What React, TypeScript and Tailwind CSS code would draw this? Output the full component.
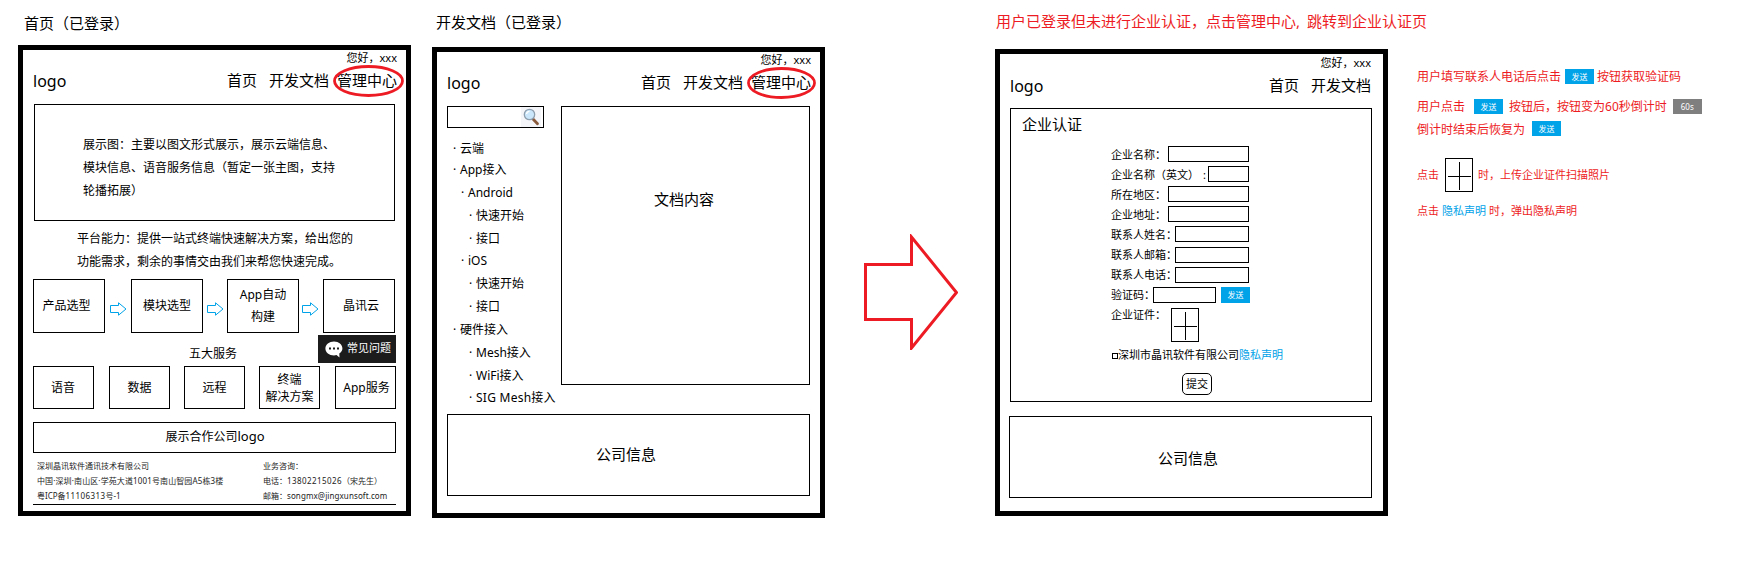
import type { ReactNode } from "react";

type Kids = { children?: ReactNode; className?: string };

const Box = ({ children, className = "" }: Kids) => (
  <div className={`flex shrink-0 border border-black ${className}`}>{children}</div>
);

const Frame = ({ children, className = "" }: Kids) => (
  <div className={`flex w-[393px] shrink-0 flex-col border-5 border-black ${className}`}>{children}</div>
);

const Send = ({ children = "发送", className = "" }: Kids) => (
  <span
    className={`flex h-[15px] w-[29px] shrink-0 items-center justify-center text-[8px] leading-none text-white ${
      className.includes("bg-") ? "" : "bg-[#00a2e8]"
    } ${className}`}
  >
    {children}
  </span>
);

const Plus = ({ className = "" }: Kids) => (
  <svg width="28" height="34" viewBox="0 0 28 34" shapeRendering="crispEdges" className={`shrink-0 ${className}`}>
    <path d="M.5.5h27v33H.5zM14.5 4v28M3 18.5h23" fill="none" stroke="#000" />
  </svg>
);

const FlowArrow = ({ className = "" }: Kids) => (
  <svg width="17" height="14" viewBox="0 0 17 14" className={`mt-[23px] shrink-0 ${className}`}>
    <path d="M.5 3.5h8V.8L16 7l-7.5 6.2v-2.7h-8z" fill="none" stroke="#00a2e8" />
  </svg>
);

const Header = ({
  manage = false,
  width = "",
  pad = "pr-[9px]",
}: {
  manage?: boolean;
  width?: string;
  pad?: string;
}) => (
  <>
    <div className={`flex h-[17px] shrink-0 items-center justify-end text-[11px] ${pad}`}>您好，xxx</div>
    <div className={`flex h-[29px] shrink-0 items-center pb-[2px] pl-[10px] text-[15px] ${pad}`}>
      <span className="mr-auto text-[16px]">logo</span>
      <span>首页</span>
      <span className="ml-3">开发文档</span>
      {manage && (
        <span className="relative ml-2">
          管理中心
          <svg
            viewBox="0 0 71 32"
            preserveAspectRatio="none"
            className={`absolute top-1/2 left-[-4px] h-8 -translate-y-1/2 ${width}`}
          >
            <ellipse cx="35.5" cy="16" rx="34" ry="14.5" fill="none" stroke="#ed1c24" strokeWidth="2.8" />
          </svg>
        </span>
      )}
    </div>
  </>
);

const HomePage = () => (
  <section className="ml-[18px] flex w-[393px] shrink-0 flex-col">
    <h2 className="flex h-[45px] items-center pt-[1px] pl-[6px] text-[15px]">首页（已登录）</h2>
    <Frame className="h-[471px]">
      <Header manage width="w-[71px]" />
      <Box className="mt-2 ml-[11px] h-[117px] w-[361px] flex-col pt-7 pl-12 text-[12px] leading-[23px]">
        <p className="h-[23px]">展示图：主要以图文形式展示，展示云端信息、</p>
        <p className="h-[23px]">模块信息、语音服务信息（暂定一张主图，支持</p>
        <p className="h-[23px]">轮播拓展）</p>
      </Box>
      <div className="mt-[6px] ml-[54px] h-[46px] text-[12px] leading-[23px]">
        <p className="h-[23px]">平台能力：提供一站式终端快速解决方案，给出您的</p>
        <p className="h-[23px]">功能需求，剩余的事情交由我们来帮您快速完成。</p>
      </div>
      <div className="mt-[6px] ml-[10px] flex h-[54px] text-[12px]">
        <Box className="w-[72px] items-center justify-center pr-[5px]">产品选型</Box>
        <FlowArrow className="mr-1 ml-[5px]" />
        <Box className="w-[72px] items-center justify-center">模块选型</Box>
        <FlowArrow className="mr-[3px] ml-1" />
        <Box className="w-[72px] flex-col items-center pt-1 leading-[22px]">
          <span className="h-[22px]">App自动</span>
          <span className="h-[22px]">构建</span>
        </Box>
        <FlowArrow className="mr-1 ml-[3px]" />
        <Box className="w-[72px] items-center justify-center pl-1">晶讯云</Box>
      </div>
      <div className="mt-[2px] ml-[166px] flex h-7 text-[12px]">
        <span className="flex w-12 items-center pt-[9px]">五大服务</span>
        <span className="ml-[81px] flex w-[78px] items-center bg-[#1c1c1c] pl-[7px] text-[11px] text-white">
          <svg width="18" height="17" viewBox="0 0 18 17" className="mr-1 shrink-0">
            <path d="M9 .4C4.200.4.4 3.500.4 7.400s3.800 7 8.600 7c.9 0 1.700-.1 2.500-.3l3 2.300-.2-4c1.900-1.300 3.100-3 3.100-5C17.400 3.500 13.800.4 9 .4z" fill="#fff" />
            <path d="M4 6.500h2v2H4zM8 6.500h2v2H8zM12 6.500h2v2h-2z" fill="#1c1c1c" />
          </svg>
          <span className="pb-[2px]">常见问题</span>
        </span>
      </div>
      <div className="mt-[3px] ml-[10px] flex h-[43px] text-[12px]">
        <Box className="w-[61px] items-center justify-center pr-px">语音</Box>
        <Box className="ml-[15px] w-[61px] items-center justify-center">数据</Box>
        <Box className="ml-[14px] w-[61px] items-center justify-center">远程</Box>
        <Box className="ml-[14px] w-[61px] flex-col items-center pt-1 leading-[17px]">
          <span className="h-[17px]">终端</span>
          <span className="h-[17px]">解决方案</span>
        </Box>
        <Box className="ml-[15px] w-[61px] items-center justify-center pl-[2px]">App服务</Box>
      </div>
      <Box className="mt-[13px] ml-[10px] h-[31px] w-[363px] items-center justify-center pb-px pl-px text-[12px]">
        <span>
          展示合作公司<span className="text-[13px]">logo</span>
        </span>
      </Box>
      <div className="mt-[5px] ml-[10px] flex h-[47px] w-[363px] border-b border-black pl-1 text-[8px] leading-[15px] whitespace-nowrap text-[#222]">
        <div className="w-[226px]">
          <p className="h-[15px]">深圳晶讯软件通讯技术有限公司</p>
          <p className="h-[15px] tracking-[0.12px]">中国·深圳·南山区·学苑大道1001号南山智园A5栋3楼</p>
          <p className="h-[15px]">
            粤ICP备<span className="tracking-[0.4px]">11106313</span>号-1
          </p>
        </div>
        <div>
          <p className="h-[15px]">业务咨询：</p>
          <p className="h-[15px]">
            电话：<span className="tracking-[0.42px]">13802215026</span>（宋先生）
          </p>
          <p className="h-[15px]">
            邮箱：<span className="tracking-[0.1px]">songmx@jingxunsoft.com</span>
          </p>
        </div>
      </div>
    </Frame>
  </section>
);

const tree: [string, string][] = [
  ["pl-[6px] pt-[3px]", "云端"],
  ["pl-[6px]", "App接入"],
  ["pl-[14px]", "Android"],
  ["pl-[22px]", "快速开始"],
  ["pl-[22px]", "接口"],
  ["pl-[14px]", "iOS"],
  ["pl-[22px]", "快速开始"],
  ["pl-[22px] pt-px", "接口"],
  ["pl-[6px] pt-px", "硬件接入"],
  ["pl-[22px] pt-px", "Mesh接入"],
  ["pl-[22px] pt-px", "WiFi接入"],
  ["pl-[22px] tracking-[0.25px]", "SIG Mesh接入"],
];

const DocsPage = () => (
  <section className="ml-[21px] flex w-[393px] shrink-0 flex-col">
    <h2 className="flex h-[47px] items-center pb-[2px] pl-1 text-[15px]">开发文档（已登录）</h2>
    <Frame className="h-[471px]">
      <Header manage width="w-[69px]" />
      <div className="mt-2 ml-[10px] flex h-[308px]">
        <div className="w-[114px] shrink-0">
          <Box className="h-[22px] w-[97px] justify-end pr-[2px]">
            <span className="flex w-[20px] bg-[#f3f5f9]">
              <svg width="20" height="20" viewBox="0 0 20 20">
                <path d="M12 12l4.500 4.800" stroke="#8a5a3c" strokeWidth="2.800" strokeLinecap="round" />
                <circle cx="8.500" cy="7.500" r="5.200" fill="#c9e6fa" stroke="#8e9fb0" strokeWidth="1.300" />
                <path d="M5.500 7a3.200 3.200 0 0 1 3-2.600" fill="none" stroke="#fff" strokeWidth="1.300" />
              </svg>
            </span>
          </Box>
          <ul className="mt-[8px] text-[12px] whitespace-nowrap">
            {tree.map(([pad, label], i) => (
              <li key={i} className={`flex h-[22.8px] items-center ${pad}`}>
                <span className="w-[7px] shrink-0">·</span>
                {label}
              </li>
            ))}
          </ul>
        </div>
        <Box className="h-[279px] w-[249px] justify-center pt-[81px] pr-[3px] text-[15px] leading-[22px]">文档内容</Box>
      </div>
      <Box className="ml-[10px] h-[82px] w-[363px] items-center justify-center pb-[1px] pr-[5px] text-[15px]">公司信息</Box>
    </Frame>
  </section>
);

const fields: [ReactNode, string, string, string][] = [
  ["企业名称：", "w-[57px]", "w-[81px]", ""],
  [<>企业名称（英文）<span className="ml-1">:</span></>, "w-[97px]", "w-[41px]", ""],
  ["所在地区：", "w-[57px]", "w-[81px]", ""],
  ["企业地址：", "w-[57px]", "w-[81px]", ""],
  ["联系人姓名：", "w-[64px]", "w-[74px]", ""],
  ["联系人邮箱：", "w-[64px]", "w-[74px]", "mt-[2px]"],
  ["联系人电话：", "w-[64px]", "w-[74px]", "mt-[2px]"],
];

const CertPage = () => (
  <section className="flex w-[393px] shrink-0 flex-col">
    <h2 className="flex h-[49px] items-center pb-[7px] pl-[1px] text-[15px] whitespace-nowrap text-[#ed1c24]">
      用户已登录但未进行企业认证，点击管理中心<span className="w-[11px] shrink-0">,</span>跳转到企业认证页
    </h2>
    <Frame className="h-[467px]">
      <div className="pt-[1px]">
        <Header pad="pr-[12px]" />
      </div>
      <Box className="mt-[7px] ml-[10px] h-[294px] w-[362px] flex-col">
        <h3 className="mt-[4px] ml-[11px] h-[22px] text-[15px] leading-[22px]">企业认证</h3>
        <div className="mt-[9px] ml-[100px] text-[11px] whitespace-nowrap">
          {fields.map(([label, lw, iw, shift], i) => (
            <div key={i} className="flex h-5 items-center">
              <span className={`shrink-0 pt-[2px] ${lw}`}>{label}</span>
              <Box className={`h-4 ${iw} ${shift}`} />
            </div>
          ))}
          <div className="flex h-5 items-center">
            <span className="w-[42px] shrink-0 pt-[2px]">验证码：</span>
            <Box className="mt-px h-4 w-[63px]" />
            <Send className="mt-px ml-[5px] h-[16px]!" />
          </div>
          <div className="flex h-[40px]">
            <span className="flex h-5 w-[60px] shrink-0 items-center pt-[2px]">企业证件：</span>
            <Plus className="mt-[4px]" />
          </div>
          <div className="flex h-5 items-center pt-[2px]">
            <span className="mt-px mr-px ml-px size-[6px] border border-black" />
            <span className="-ml-px">深圳市晶讯软件有限公司</span>
            <span className="text-[#00a2e8]">隐私声明</span>
          </div>
          <Box className="mt-[9px] ml-[71px] h-[22px] w-[30px] items-center justify-center rounded-[5px]">提交</Box>
        </div>
      </Box>
      <Box className="mt-[14px] ml-[9px] h-[82px] w-[363px] items-center justify-center pt-[2px] pr-[5px] text-[15px]">公司信息</Box>
    </Frame>
  </section>
);

const Notes = () => (
  <aside className="ml-[29px] flex w-[310px] shrink-0 flex-col pt-[67px] text-[12px] whitespace-nowrap text-[#ed1c24]">
    <div className="flex h-[19px] items-center">
      用户填写联系人电话后点击
      <Send className="mr-[3px] ml-1" />
      按钮获取验证码
    </div>
    <div className="mt-[11px] flex h-[19px] items-center">
      用户点击
      <Send className="mr-[6px] ml-[9px]" />
      按钮后，按钮变为60秒倒计时
      <Send className="ml-[6px] bg-[#7f7f7f]">60s</Send>
    </div>
    <div className="mt-[3px] flex h-[19px] items-center">
      <span className="pt-[2px]">倒计时结束后恢复为</span>
      <Send className="ml-[7px]" />
    </div>
    <div className="mt-5 flex h-[34px] items-center text-[11px]">
      点击
      <Plus className="mr-[5px] ml-[6px]" />
      时，上传企业证件扫描照片
    </div>
    <div className="mt-[9px] flex h-[20px] items-center text-[11px]">
      点击
      <span className="mr-[3px] ml-[3px] text-[#00a2e8]">隐私声明</span>
      时，弹出隐私声明
    </div>
  </aside>
);

export default function App() {
  return (
    <main className="flex h-[572px] w-[1746px] overflow-hidden bg-white font-['Noto_Sans','Noto_Sans_CJK_SC',sans-serif] text-black">
      <HomePage />
      <DocsPage />
      <svg width="94" height="116" viewBox="0 0 94 116" className="mt-[234px] mr-[37px] ml-[39px] shrink-0">
        <path
          d="M1.500 30.500h46v-27.500L92.500 58.500l-45 55.500V85.500h-46z"
          fill="none"
          stroke="#ed1c24"
          strokeWidth="3"
        />
      </svg>
      <CertPage />
      <Notes />
    </main>
  );
}
